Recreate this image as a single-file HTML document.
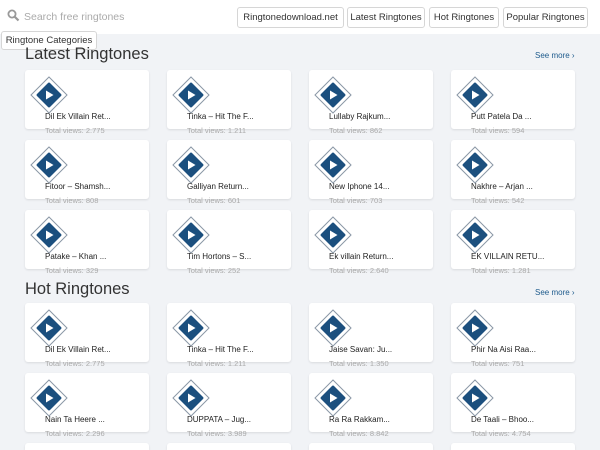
<!DOCTYPE html>
<html style="width:600px;height:450px;overflow:hidden"><head><meta charset="utf-8"><style>
*{margin:0;padding:0;box-sizing:border-box}
body{width:600px;height:450px;overflow:hidden;background:#f1f3f6;font-family:"Liberation Sans",sans-serif;position:relative}
.hdr{position:absolute;left:0;top:0;width:600px;height:34px;background:#fff}
.btn{position:absolute;top:7px;height:21px;border:1px solid #d6d6d6;border-radius:3px;background:#fff;font-size:9.5px;color:#333;line-height:19px;text-align:center}
.search{position:absolute;left:24px;top:11px;font-size:10.5px;color:#aaa}
.cat{position:absolute;left:1px;top:31px;width:96px;height:19px;border:1px solid #d6d6d6;border-radius:3px;background:#fff;font-size:9.5px;color:#333;line-height:17px;text-align:center}
h2{position:absolute;left:25px;font-weight:normal;font-size:16.5px;color:#333}
.more{position:absolute;left:535px;font-size:8px;color:#1d5a8c}
.card{position:absolute;width:124px;height:59px;background:#fff;border-radius:3px;box-shadow:0 1px 2px rgba(0,0,0,.1)}
.card svg{position:absolute;left:5px;top:6px}
.t{position:absolute;left:20px;top:42px;font-size:8px;color:#222;white-space:nowrap}
.v{position:absolute;left:20px;top:56px;font-size:7.5px;color:#aaa;white-space:nowrap}
.last{position:absolute;top:443px;width:124px;height:7px;background:#fff;border-radius:3px 3px 0 0;box-shadow:0 1px 2px rgba(0,0,0,.1)}
</style></head><body>
<div class="hdr"></div>
<svg style="position:absolute;left:7px;top:9px" width="13" height="13" viewBox="0 0 13 13"><circle cx="5" cy="5" r="3.6" fill="none" stroke="#999" stroke-width="1.8"/><path d="M7.6 7.6L11.5 11.5" stroke="#999" stroke-width="2.2"/></svg>
<div class="search">Search free ringtones</div>
<div class="btn" style="left:237px;width:107px">Ringtonedownload.net</div>
<div class="btn" style="left:347px;width:78px">Latest Ringtones</div>
<div class="btn" style="left:429px;width:70px">Hot Ringtones</div>
<div class="btn" style="left:503px;width:85px">Popular Ringtones</div>
<div class="cat">Ringtone Categories</div>
<h2 style="top:45px">Latest Ringtones</h2>
<div class="more" style="top:51px">See more ›</div>
<h2 style="top:280px">Hot Ringtones</h2>
<div class="more" style="top:288px">See more ›</div>
<div class="last" style="left:25px"></div>
<div class="last" style="left:167px"></div>
<div class="last" style="left:309px"></div>
<div class="last" style="left:451px"></div>
<div id="c"></div>
<script>
var ic='<svg width="38" height="38" viewBox="0 0 38 38"><path d="M19 1L37 19L19 37L1 19Z" fill="#fff" stroke="#8a97a6" stroke-width="1"/><path d="M19 6.5Q19.5 6.5 20 7L31 18Q32 19 31 20L20 31Q19 32 18 31L7 20Q6 19 7 18L18 7Q18.5 6.5 19 6.5Z" fill="#1b4f7e"/><path d="M16 14.5L23.5 19L16 23.5Z" fill="#fff"/></svg>';
var xs=[25,167,309,451];
var rows=[[70,[["Dil Ek Villain Ret...","2.775"],["Tinka – Hit The F...","1.211"],["Lullaby Rajkum...","862"],["Putt Patela Da ...","594"]]],
[140,[["Fitoor – Shamsh...","808"],["Galliyan Return...","601"],["New Iphone 14...","703"],["Nakhre – Arjan ...","542"]]],
[210,[["Patake – Khan ...","329"],["Tim Hortons – S...","252"],["Ek villain Return...","2.640"],["EK VILLAIN RETU...","1.281"]]],
[303,[["Dil Ek Villain Ret...","2.775"],["Tinka – Hit The F...","1.211"],["Jaise Savan: Ju...","1.350"],["Phir Na Aisi Raa...","751"]]],
[373,[["Nain Ta Heere ...","2.296"],["DUPPATA – Jug...","3.989"],["Ra Ra Rakkam...","8.842"],["De Taali – Bhoo...","4.754"]]]];
var h='';
rows.forEach(function(r){r[1].forEach(function(c,i){h+='<div class="card" style="left:'+xs[i]+'px;top:'+r[0]+'px">'+ic+'<div class="t">'+c[0]+'</div><div class="v">Total views: '+c[1]+'</div></div>';});});
document.getElementById('c').innerHTML=h;
</script>
</body></html>
